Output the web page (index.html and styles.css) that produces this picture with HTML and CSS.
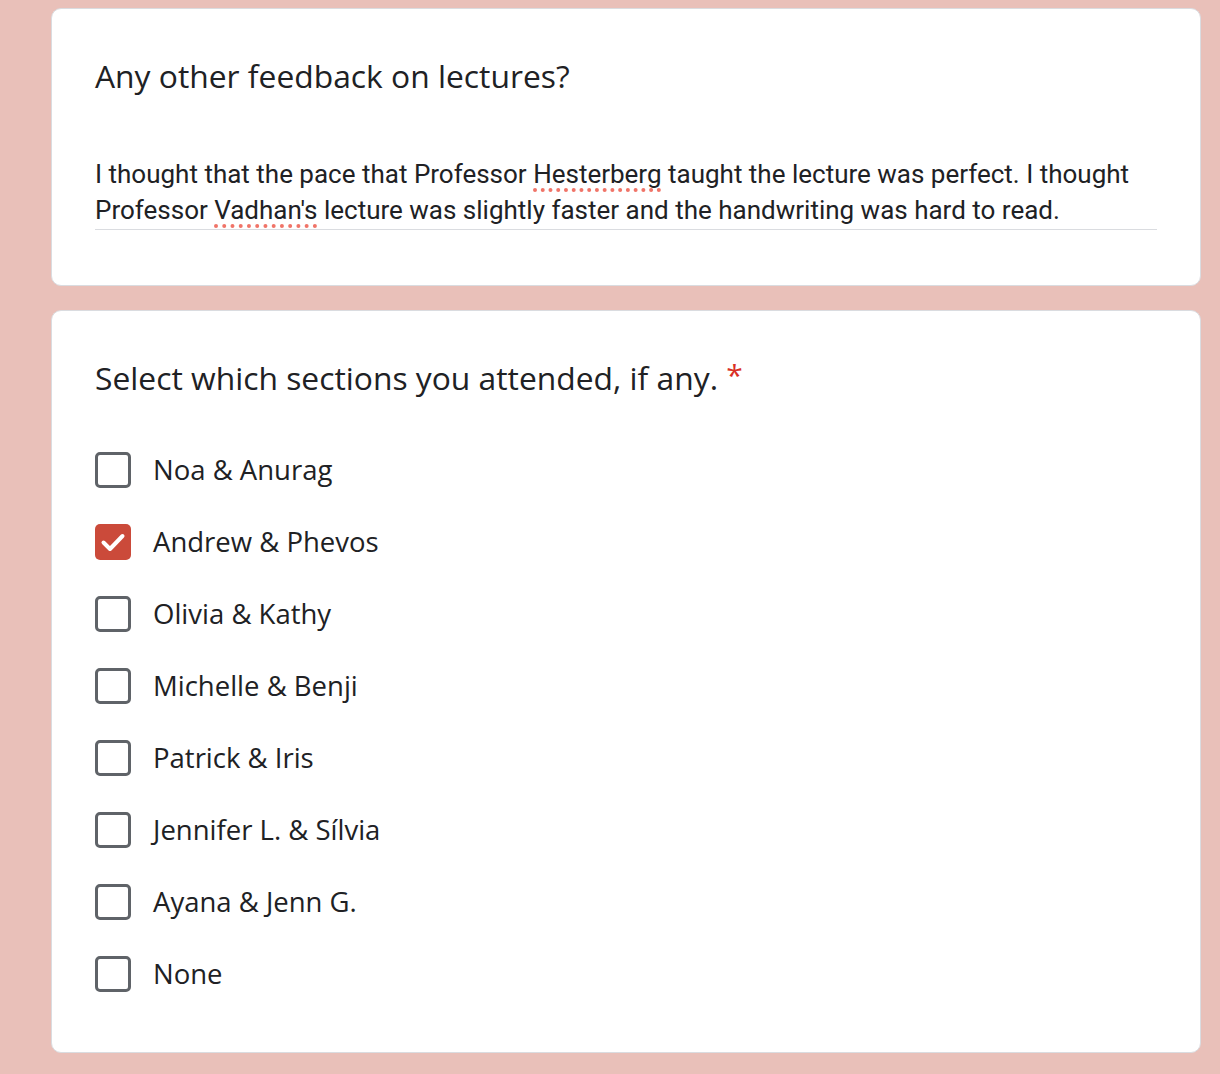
FILE: index.html
```html
<!DOCTYPE html>
<html>
<head>
<meta charset="utf-8">
<link rel="stylesheet" href="styles.css">
</head>
<body>
<main class="page">
  <section class="card card-text">
    <h2 class="question">Any other feedback on lectures?</h2>
    <div class="answer">I thought that the pace that Professor <span class="spell">Hesterberg</span> taught the lecture was perfect. I thought Professor <span class="spell">Vadhan's</span> lecture was slightly faster and the handwriting was hard to read.</div>
  </section>
  <section class="card card-check">
    <h2 class="question">Select which sections you attended, if any. <span class="req">*</span></h2>
    <ul class="options">
      <li class="option"><span class="box"></span><span class="label">Noa &amp; Anurag</span></li>
      <li class="option"><span class="box checked"><svg viewBox="0 0 36 36" width="36" height="36"><path d="M8.5 18.5 L15 25 L27.5 12" fill="none" stroke="#fff" stroke-width="4" stroke-linecap="round" stroke-linejoin="round"/></svg></span><span class="label">Andrew &amp; Phevos</span></li>
      <li class="option"><span class="box"></span><span class="label">Olivia &amp; Kathy</span></li>
      <li class="option"><span class="box"></span><span class="label">Michelle &amp; Benji</span></li>
      <li class="option"><span class="box"></span><span class="label">Patrick &amp; Iris</span></li>
      <li class="option"><span class="box"></span><span class="label">Jennifer L. &amp; Sílvia</span></li>
      <li class="option"><span class="box"></span><span class="label">Ayana &amp; Jenn G.</span></li>
      <li class="option"><span class="box"></span><span class="label">None</span></li>
    </ul>
  </section>
</main>
</body>
</html>
```

FILE: styles.css
```css
html, body {
  margin: 0;
  padding: 0;
}
body {
  background: #e9c0b9;
  font-family: "Open Sans", "Lato", sans-serif;
  color: #202124;
}
.page {
  padding: 8px 0 0 51px;
  display: flex;
  flex-direction: column;
  gap: 24px;
}
.card {
  box-sizing: border-box;
  width: 1150px;
  background: #fff;
  border: 1px solid #dadce0;
  border-radius: 10px;
  padding: 49px 43px 0 43px;
}
.card-text {
  height: 278px;
}
.card-check {
  height: 743px;
}
.question {
  margin: 0;
  font-weight: 400;
  font-size: 31.8px;
  line-height: 36px;
  color: #202124;
}
.req {
  color: #d93025;
  font-size: 30px;
  position: relative;
  top: -4px;
}
.answer {
  margin-top: 62px;
  font-family: "Roboto", sans-serif;
  font-size: 26px;
  line-height: 36px;
  border-bottom: 1px solid #dadce0;
  padding-bottom: 1px;
  color: #202124;
}
.spell {
  text-decoration-line: underline;
  text-decoration-style: dotted;
  text-decoration-color: #f07468;
  text-decoration-thickness: 4px;
  text-underline-offset: 5px;
}
.options {
  list-style: none;
  margin: 55px 0 0 0;
  padding: 0;
  display: flex;
  flex-direction: column;
  gap: 36px;
}
.option {
  display: flex;
  align-items: center;
  gap: 22px;
  height: 36px;
}
.box {
  box-sizing: border-box;
  width: 36px;
  height: 36px;
  border: 3px solid #5f6368;
  border-radius: 5px;
  flex: none;
}
.box.checked {
  border: none;
  background: #cb4a3a;
}
.box svg {
  display: block;
}
.label {
  font-size: 27.5px;
  line-height: 36px;
}
```
